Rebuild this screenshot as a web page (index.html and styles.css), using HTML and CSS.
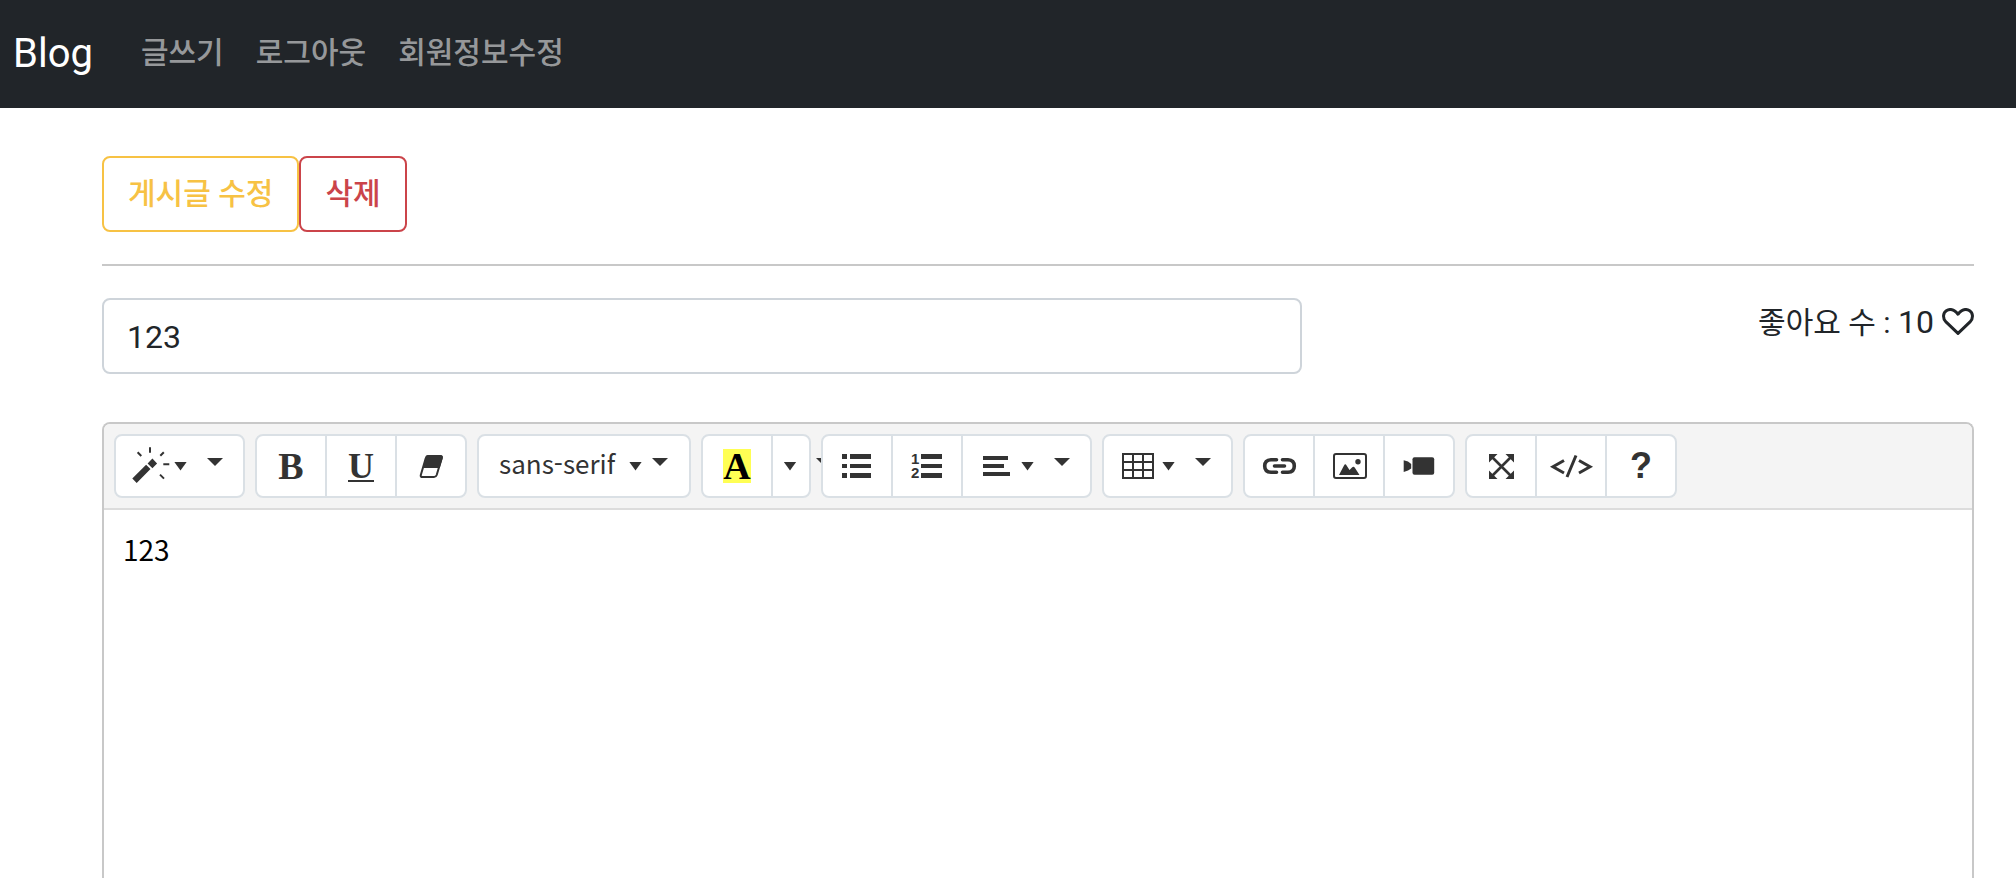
FILE: index.html
```html
<!DOCTYPE html>
<html lang="ko">
<head>
  <meta charset="UTF-8">
  <meta name="viewport" content="width=device-width, initial-scale=1.0">
  <title>Blog</title>
  <link rel="stylesheet" href="styles.css">
</head>
<body>

  <nav class="navbar">
    <a class="navbar-brand" href="/">Blog</a>
    <ul class="navbar-nav">
      <li><a class="nav-link" href="/board/saveForm">글쓰기</a></li>
      <li><a class="nav-link" href="/logout">로그아웃</a></li>
      <li><a class="nav-link" href="/user/updateForm">회원정보수정</a></li>
    </ul>
  </nav>

  <main class="container">
    <div class="actions">
      <button type="button" class="btn btn-warning">게시글 수정</button>
      <button type="button" class="btn btn-danger">삭제</button>
    </div>
    <hr>

    <form class="board-form">
      <div class="title-row">
        <input type="text" class="form-control" id="title" aria-label="제목" value="123">
        <div class="likes">
          <span>좋아요 수 : <span class="like-count">10</span></span>
          <button type="button" class="like-btn" aria-label="좋아요">
            <svg class="heart" viewBox="0 0 32 28"><path d="M16 25.4L3.7 13.6C.5 10 1 5 4.3 2.8C7.900 .5 12 1.300 16 6.200C20 1.300 24.100 .5 27.700 2.800C31 5 31.500 10 28.300 13.600Z"/></svg>
          </button>
        </div>
      </div>

      <div class="editor">
        <div class="toolbar">
          <div class="group">
            <button type="button" class="tool menu" aria-label="Style">
              <svg class="icon" viewBox="0 0 40 40">
                <path d="M.3 32.600L4.700 36.900L18.500 23.100L14.100 18.700ZM20.400 12.600L25.100 17.400L20.400 22.200L15.600 17.400Z"/>
                <path class="line" d="M18 1.300V6.800M28.300 9.800L31.800 6.300M31.300 18.300H37.300M28 28.600L32 32.600M5.600 6.300L9.300 10"/>
              </svg>
              <span class="caret"></span>
              <span class="toggle"></span>
            </button>
          </div>

          <div class="group">
            <button type="button" class="tool glyph" aria-label="Bold">B</button>
            <button type="button" class="tool glyph" aria-label="Underline"><span class="under">U</span></button>
            <button type="button" class="tool" aria-label="Remove Font Style">
              <svg class="icon" viewBox="0 0 40 40">
                <path class="line" d="M17 10H29Q31.300 10 30.700 12.200L25.700 29Q25 31 23 31H11.500Q9.200 31 9.800 29L14.800 12Q15.300 10 17 10Z"/>
                <path d="M17 9H29Q32.500 9 31.700 12.200L28.700 22H11.800L14.300 12Q15 9 17 9Z"/>
              </svg>
            </button>
          </div>

          <div class="group">
            <button type="button" class="tool font-menu" aria-label="Font Family">
              <span class="font-name">sans-serif</span>
              <span class="caret"></span>
              <span class="toggle"></span>
            </button>
          </div>

          <div class="group color-group">
            <button type="button" class="tool glyph" aria-label="Recent Color"><span class="marked">A</span></button>
            <button type="button" class="tool more" aria-label="More Color"><span class="caret"></span></button>
            <span class="toggle stray"></span>
          </div>

          <div class="group">
            <button type="button" class="tool" aria-label="Unordered list">
              <svg class="icon" viewBox="0 0 40 40"><path d="M5 8h5v5h-5zM5 18h5v4h-5zM5 27h5v5h-5zM13 8h21v5h-21zM13 18h21v4h-21zM13 27h21v5h-21z"/></svg>
            </button>
            <button type="button" class="tool" aria-label="Ordered list">
              <svg class="icon" viewBox="0 0 40 40">
                <path d="M14 8h21v5h-21zM14 18h21v4h-21zM14 27h21v5h-21z"/>
                <text x="4" y="18">1</text>
                <text x="4" y="32">2</text>
              </svg>
            </button>
            <button type="button" class="tool menu" aria-label="Paragraph">
              <svg class="icon" viewBox="0 0 40 40"><path d="M4 10h25v4h-25zM4 18h21v4h-21zM4 26h27v4h-27z"/></svg>
              <span class="caret"></span>
              <span class="toggle"></span>
            </button>
          </div>

          <div class="group">
            <button type="button" class="tool menu" aria-label="Table">
              <svg class="icon" viewBox="0 0 40 40"><path class="line thin" d="M3 8H33V32H3ZM3 16H33M3 24H33M13 8V32M23 8V32"/></svg>
              <span class="caret"></span>
              <span class="toggle"></span>
            </button>
          </div>

          <div class="group">
            <button type="button" class="tool" aria-label="Link">
              <svg class="icon" viewBox="0 0 40 40"><path class="line round" d="M17.500 13.700H12Q5.700 14 5.700 20T12 26.300H17.500M23.500 13.700H29Q35.300 14 35.300 20T29 26.300H23.500M15.500 20H25.500"/></svg>
            </button>
            <button type="button" class="tool" aria-label="Picture">
              <svg class="icon" viewBox="0 0 40 40">
                <rect class="line" x="5" y="8" width="32" height="24" rx="2"/>
                <path d="M10 29L15 19.500Q16.300 17 17.600 19.500L20.500 24L23 21.500Q24.700 20 26 22L30.500 29Z"/>
                <circle cx="29" cy="15.700" r="2.700"/>
              </svg>
            </button>
            <button type="button" class="tool" aria-label="Video">
              <svg class="icon" viewBox="0 0 40 40"><rect x="13.500" y="11.300" width="21.700" height="17.400" rx="2"/><path d="M4.700 14.200L9 15.600L12.200 18V22.500L9 24.500L4.700 26Z"/></svg>
            </button>
          </div>

          <div class="group">
            <button type="button" class="tool" aria-label="Full Screen">
              <svg class="icon" viewBox="0 0 40 40">
                <path class="line cross" d="M11 11L30 30M30 11L11 30"/>
                <path d="M8 8H16.500L8 16.500ZM33 8V16.500L24.500 8ZM8 33V24.500L16.500 33ZM33 33H24.500L33 24.500Z"/>
              </svg>
            </button>
            <button type="button" class="tool" aria-label="Code View">
              <svg class="icon" viewBox="0 0 40 40"><path class="line code" d="M13 14.500L2 20.800L13 27M28 14.500L39 20.800L28 27M25 9.500L16 31"/></svg>
            </button>
            <button type="button" class="tool glyph help" aria-label="Help">?</button>
          </div>
        </div>

        <div class="editable" contenteditable="true" role="textbox" aria-label="내용"><p>123</p></div>
      </div>
    </form>
  </main>

</body>
</html>
```
FILE: styles.css
```css
* {
  box-sizing: border-box;
}

body {
  display: flex;
  flex-direction: column;
  height: 100vh;
  margin: 0;
  overflow: hidden;
  background: #fff;
  color: #212529;
  font-family: Roboto, "Noto Sans CJK KR", sans-serif;
  font-size: 30px;
  line-height: 48px;
}

button,
input {
  font-family: inherit;
}

/* navbar */
.navbar {
  display: flex;
  align-items: center;
  padding: 14px 13px;
  background: #212529;
}

.navbar-brand {
  margin-right: 32px;
  color: #fff;
  font-size: 40px;
  text-decoration: none;
}

.navbar-nav {
  display: flex;
  margin: 0;
  padding: 0;
  list-style: none;
}

.nav-link {
  display: block;
  padding: 15px 16px 17px;
  color: rgba(255, 255, 255, 0.55);
  font-weight: 500;
  text-decoration: none;
}

/* board */
.container {
  display: flex;
  flex: 1;
  flex-direction: column;
  padding: 48px 42px 0 102px;
}

.actions {
  display: flex;
}

.btn {
  padding: 12px 24px;
  border: 2px solid;
  border-radius: 8px;
  background: #fff;
  font-size: 30px;
  font-weight: 500;
  line-height: 48px;
  cursor: pointer;
}

.btn-warning {
  color: #f7c244;
}

.btn-danger {
  color: #cb444a;
}

hr {
  width: 100%;
  height: 2px;
  margin: 32px 0;
  border: 0;
  background: #c8c8c8;
}

.board-form {
  display: flex;
  flex: 1;
  flex-direction: column;
}

.title-row {
  display: grid;
  grid-template-columns: 25fr 14fr;
  margin-bottom: 48px;
}

.form-control {
  width: 100%;
  height: 76px;
  padding: 13px 23px 11px;
  border: 2px solid #ced4da;
  border-radius: 8px;
  color: #212529;
  font-size: 32px;
}

.likes {
  display: flex;
  justify-content: flex-end;
  align-items: flex-start;
  gap: 8px;
}

.like-count {
  font-size: 32px;
}

.like-btn {
  display: flex;
  align-items: center;
  height: 48px;
  padding: 0;
  border: 0;
  background: none;
  cursor: pointer;
}

.heart {
  width: 32px;
  height: 28px;
  fill: none;
  stroke: #212529;
  stroke-width: 3;
  stroke-linejoin: round;
}

/* editor */
.editor {
  flex: 1;
  border: 2px solid #c8c8c8;
  border-bottom: 0;
  border-radius: 8px 8px 0 0;
}

.toolbar {
  display: flex;
  flex-wrap: wrap;
  gap: 10px;
  padding: 10px;
  border-bottom: 2px solid #dcdcdc;
  border-radius: 6px 6px 0 0;
  background: #f4f4f4;
}

.group {
  display: flex;
  position: relative;
}

.tool {
  display: flex;
  justify-content: center;
  align-items: center;
  width: 72px;
  height: 64px;
  padding: 0;
  border: 2px solid #dae0e5;
  background: #fff;
  color: #333;
  cursor: pointer;
}

.tool + .tool {
  margin-left: -2px;
}

.tool:first-of-type {
  border-top-left-radius: 8px;
  border-bottom-left-radius: 8px;
}

.tool:last-of-type {
  border-top-right-radius: 8px;
  border-bottom-right-radius: 8px;
}

.menu {
  justify-content: flex-start;
  gap: 2px;
  width: 131px;
  padding-left: 16px;
}

.menu .toggle {
  margin-left: 18px;
}

.more {
  width: 40px;
  padding-right: 2px;
}

.caret {
  width: 13px;
  height: 9px;
  background: #333;
  clip-path: polygon(0 0, 100% 0, 50% 100%);
}

.toggle {
  width: 16px;
  height: 8px;
  margin-bottom: 8px;
  background: #333;
  clip-path: polygon(0 0, 100% 0, 50% 100%);
}

.stray {
  position: absolute;
  top: 24px;
  left: calc(100% + 5px);
}

.font-menu {
  justify-content: flex-start;
  gap: 10px;
  width: 214px;
  padding-left: 20px;
}

.font-name {
  flex: 1;
  padding-bottom: 6px;
  font-family: "Noto Sans CJK KR", sans-serif;
  font-size: 26px;
  line-height: 32px;
  text-align: left;
}

.font-menu .toggle {
  margin-right: 21px;
}

.glyph {
  font-family: "Liberation Serif", serif;
  font-size: 38px;
  font-weight: bold;
}

.under {
  font-size: 36px;
  text-decoration: underline 2px;
  text-underline-offset: 2px;
}

.marked {
  background: #ffff54;
  color: #000;
  line-height: 34px;
}

.help {
  font-family: "Liberation Sans", sans-serif;
  font-size: 36px;
}

.icon {
  flex: none;
  width: 40px;
  height: 40px;
  overflow: visible;
  fill: #333;
}

.icon text {
  font-family: "Liberation Sans", sans-serif;
  font-size: 15px;
  font-weight: bold;
}

.line {
  fill: none;
  stroke: #333;
  stroke-width: 2;
}

.cross {
  stroke-width: 2.6;
}

.round {
  stroke-width: 3.6;
  stroke-linecap: round;
}

.code {
  stroke-width: 3;
}

.editable {
  padding: 15px 19px;
  color: #000;
  font-family: "Noto Sans CJK KR", sans-serif;
  font-size: 28px;
  line-height: 48px;
  outline: 0;
}

.editable p {
  margin: 0;
}
```
